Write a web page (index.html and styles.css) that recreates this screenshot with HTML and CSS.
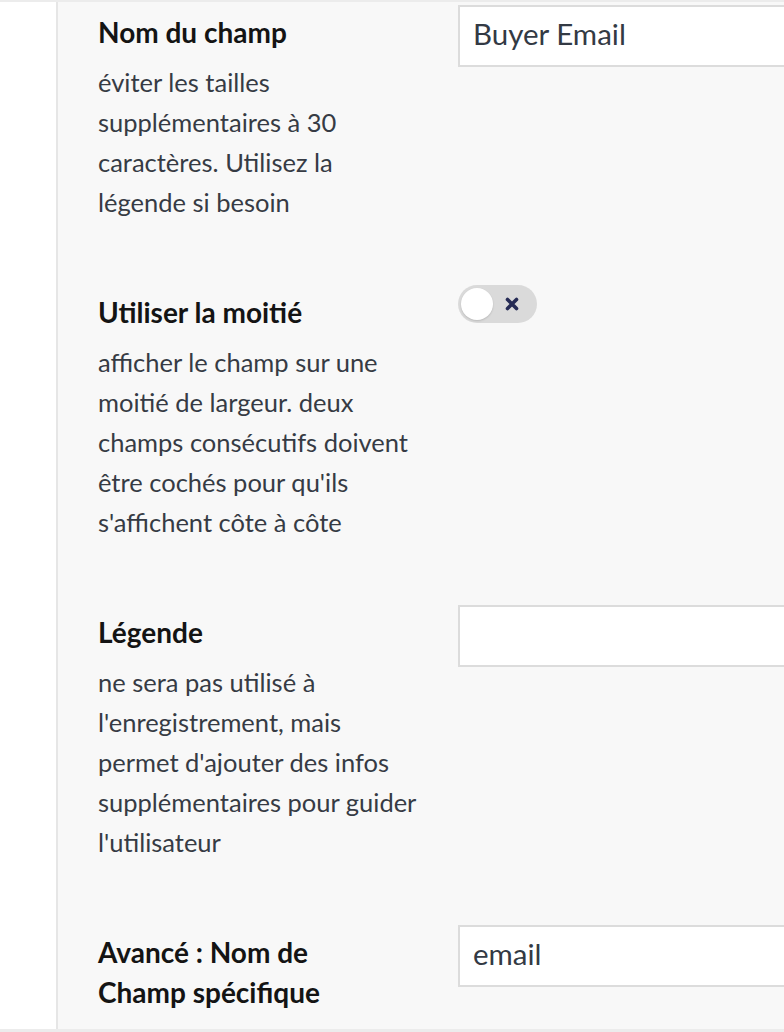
FILE: index.html
```html
<html>
<head>
    <meta charset="utf-8">
    <title>Champ</title>
    <link rel="stylesheet" href="styles.css">
</head>
<body>
    <div class="page">
        <div class="side"></div>
        <div class="panel">
            <div class="row">
                <div class="label">
                    <div class="title">Nom du champ</div>
                    <div class="desc">éviter les tailles<br>supplémentaires à 30<br>caractères. Utilisez la<br>légende si besoin</div>
                </div>
                <div class="field">
                    <div class="input">Buyer Email</div>
                </div>
            </div>
            <div class="row">
                <div class="label">
                    <div class="title">Utiliser la moitié</div>
                    <div class="desc">afficher le champ sur une<br>moitié de largeur. deux<br>champs consécutifs doivent<br>être cochés pour qu'ils<br>s'affichent côte à côte</div>
                </div>
                <div class="field">
                    <div class="toggle">
                        <span class="knob"></span>
                        <svg class="cross" width="16" height="16" viewBox="0 0 16 16">
                            <path d="M3.5 3.5 L12.5 12.5 M12.5 3.5 L3.5 12.5" stroke="#262b55" stroke-width="3.6" stroke-linecap="round"/>
                        </svg>
                    </div>
                </div>
            </div>
            <div class="row">
                <div class="label">
                    <div class="title">Légende</div>
                    <div class="desc">ne sera pas utilisé à<br>l'enregistrement, mais<br>permet d'ajouter des infos<br>supplémentaires pour guider<br>l'utilisateur</div>
                </div>
                <div class="field">
                    <div class="input"></div>
                </div>
            </div>
            <div class="row">
                <div class="label">
                    <div class="title">Avancé : Nom de<br>Champ spécifique</div>
                </div>
                <div class="field">
                    <div class="input">email</div>
                </div>
            </div>
        </div>
    </div>
</body>
</html>
```

FILE: styles.css
```css
* {
    margin: 0;
    padding: 0;
    box-sizing: border-box;
}

html, body {
    height: 100%;
    overflow: hidden;
}

body {
    background: #fff;
    font-family: Lato, "Open Sans", sans-serif;
}

.page {
    display: flex;
    height: 1032px;
    border-top: 2px solid #ececec;
    border-bottom: 3px solid #ececec;
}

.side {
    width: 56px;
    flex: none;
    background: #fff;
}

.panel {
    flex: 1;
    background: #f8f8f8;
    border-left: 2px solid #e6e6e6;
    padding: 3px 0 0 40px;
    display: flex;
    flex-direction: column;
    gap: 63px;
}

.row {
    display: grid;
    grid-template-columns: 360px 420px;
    align-items: start;
}

.title {
    margin-top: 7px;
    font-size: 28px;
    line-height: 40px;
    font-weight: 700;
    color: #141414;
}

.desc {
    margin-top: 10px;
    font-size: 25.5px;
    line-height: 40px;
    color: #363b44;
}

.input {
    height: 62px;
    background: #fff;
    border: 2px solid #dcdcdc;
    padding: 0 13px;
    font-size: 29.5px;
    line-height: 54px;
    color: #333a44;
}

.toggle {
    width: 79px;
    height: 38px;
    border-radius: 19px;
    background: #dadada;
    display: flex;
    align-items: center;
    padding: 0 3px;
}

.knob {
    width: 32px;
    height: 32px;
    border-radius: 50%;
    background: #fff;
    box-shadow: 0 1px 2px rgba(0, 0, 0, 0.15);
}

.cross {
    margin-left: 11px;
}
```
